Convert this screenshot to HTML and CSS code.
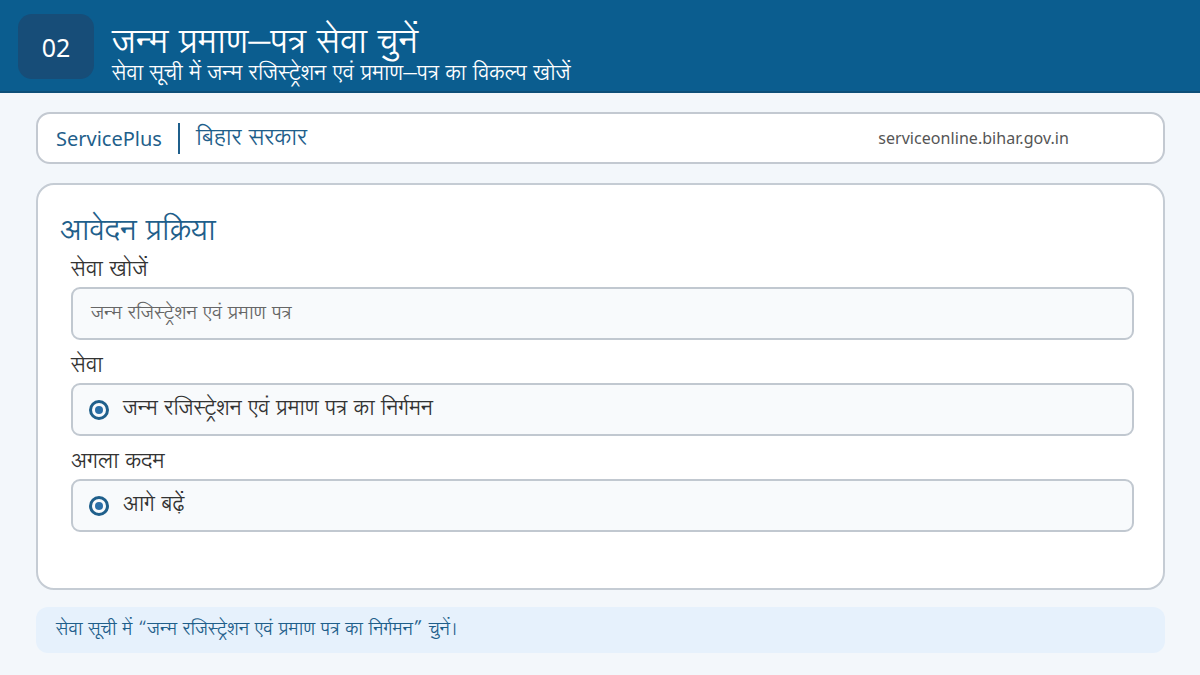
FILE: index.html
```html
<!DOCTYPE html>
<html lang="hi">
<head>
<meta charset="utf-8">
<title>जन्म प्रमाण–पत्र सेवा चुनें</title>
<link rel="stylesheet" href="styles.css">
</head>
<body>
<header class="topbar">
  <div class="step">02</div>
  <div class="heads">
    <h1 class="title">जन्म प्रमाण–पत्र सेवा चुनें</h1>
    <p class="subtitle">सेवा सूची में जन्म रजिस्ट्रेशन एवं प्रमाण–पत्र का विकल्प खोजें</p>
  </div>
</header>
<main class="content">
  <section class="brand">
    <div class="brand-left">
      <span class="brand-name">ServicePlus</span>
      <span class="brand-sep"></span>
      <span class="brand-gov">बिहार सरकार</span>
    </div>
    <span class="brand-url">serviceonline.bihar.gov.in</span>
  </section>
  <section class="panel">
    <h2 class="panel-title">आवेदन प्रक्रिया</h2>
    <div class="fields">
      <div class="field">
        <div class="label">सेवा खोजें</div>
        <div class="box input">जन्म रजिस्ट्रेशन एवं प्रमाण पत्र</div>
      </div>
      <div class="field">
        <div class="label">सेवा</div>
        <div class="box option"><span class="radio"></span><span>जन्म रजिस्ट्रेशन एवं प्रमाण पत्र का निर्गमन</span></div>
      </div>
      <div class="field">
        <div class="label">अगला कदम</div>
        <div class="box option"><span class="radio"></span><span>आगे बढ़ें</span></div>
      </div>
    </div>
  </section>
  <section class="note">सेवा सूची में “जन्म रजिस्ट्रेशन एवं प्रमाण पत्र का निर्गमन” चुनें।</section>
</main>
</body>
</html>
```
FILE: styles.css
```css
* { box-sizing: border-box; }
html, body { margin: 0; padding: 0; }
body {
  width: 1200px;
  height: 675px;
  overflow: hidden;
  background: #f3f7fb;
  font-family: "Lohit Devanagari", "Noto Sans", sans-serif;
  color: #333;
}
.topbar {
  height: 93px;
  background: #0b5d8f;
  border-bottom: 2px solid #0d4f78;
  display: flex;
  align-items: center;
  padding: 0 0 0 18px;
  gap: 18px;
}
.step {
  width: 76px;
  height: 65px;
  border-radius: 14px;
  background: #174d78;
  color: #fff;
  font-family: "Noto Sans", sans-serif;
  font-size: 25px;
  display: flex;
  align-items: center;
  justify-content: center;
  margin-top: 2px;
}
.heads {
  display: flex;
  flex-direction: column;
  padding-top: 20px;
}
.title {
  margin: 0;
  font-size: 34px;
  font-weight: 400;
  line-height: 37px;
  color: #fff;
}
.subtitle {
  margin: 0;
  font-size: 21px;
  line-height: 24px;
  color: #fff;
}
.content {
  padding: 19px 35px 0 36px;
  display: flex;
  flex-direction: column;
}
.brand {
  height: 52px;
  background: #fff;
  border: 2px solid #c3c9d1;
  border-radius: 14px;
  display: flex;
  align-items: center;
  justify-content: space-between;
  padding: 0 94px 0 18px;
}
.brand-left { display: flex; align-items: center; }
.brand-name { font-family: "Noto Sans", sans-serif; font-size: 20px; color: #1f5f8b; }
.brand-sep {
  width: 2px;
  height: 31px;
  background: #1f5f8b;
  margin: 0 16px 0 16px;
}
.brand-gov { font-size: 23px; color: #1f5f8b; }
.brand-url { font-family: "Noto Sans", sans-serif; font-size: 16px; color: #555; letter-spacing: 0.05px; }
.panel {
  margin-top: 19px;
  height: 407px;
  background: #fff;
  border: 2px solid #c5ccd4;
  border-radius: 18px;
  padding: 27px 29px 0 22px;
}
.panel-title {
  margin: 0;
  font-size: 29px;
  font-weight: 400;
  line-height: 40px;
  color: #1f5f8b;
}
.fields {
  padding-left: 11px;
  display: flex;
  flex-direction: column;
  gap: 11px;
  margin-top: 3px;
}
.field { display: flex; flex-direction: column; gap: 2px; }
.label { font-size: 21.5px; line-height: 30px; color: #333; }
.box {
  height: 53px;
  background: #f8fafc;
  border: 2px solid #c1c8d0;
  border-radius: 9px;
  display: flex;
  align-items: center;
}
.input { padding-left: 18px; font-size: 18.8px; color: #666; }
.option { padding-left: 16px; gap: 14px; font-size: 21px; color: #333; }
.radio {
  width: 20px;
  height: 20px;
  border-radius: 50%;
  border: 3px solid #1f5f8b;
  display: flex;
  align-items: center;
  justify-content: center;
  flex: none;
}
.radio::after {
  content: "";
  width: 8px;
  height: 8px;
  border-radius: 50%;
  background: #2a6fa8;
}
.note {
  margin-top: 17px;
  height: 46px;
  background: #e6f1fc;
  border-radius: 12px;
  padding-left: 20px;
  display: flex;
  align-items: center;
  font-size: 18px;
  color: #1f5f8b;
}
```
